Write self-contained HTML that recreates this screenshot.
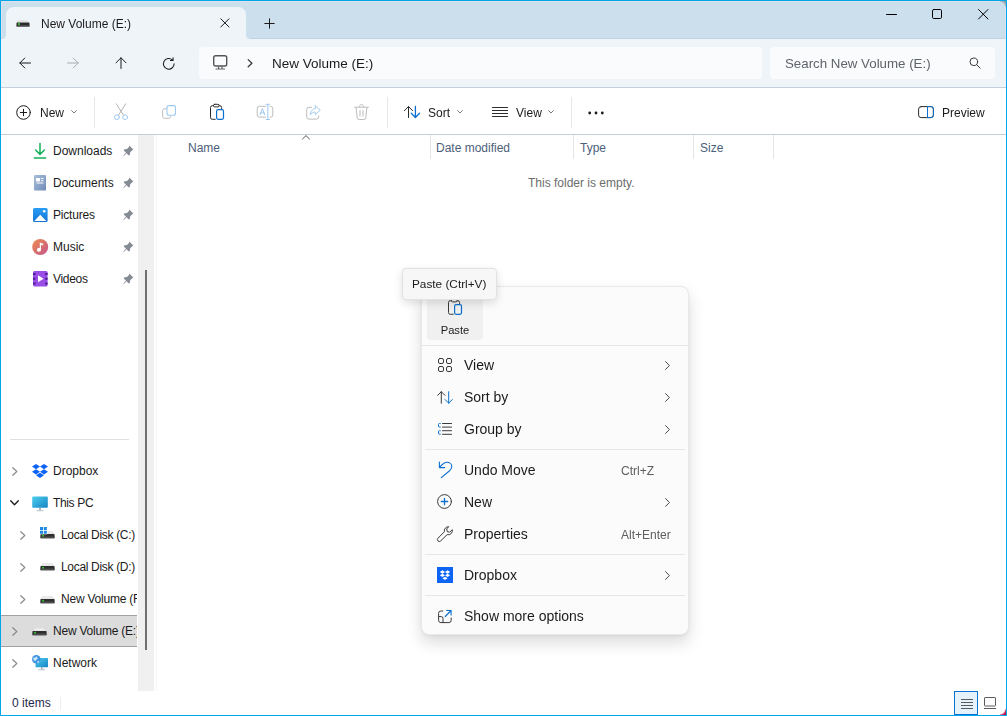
<!DOCTYPE html>
<html lang="en">
<head>
<meta charset="utf-8">
<title>New Volume (E:) - File Explorer</title>
<style>
*{box-sizing:border-box;margin:0;padding:0}
html,body{width:1007px;height:716px;overflow:hidden;background:#fff}
body{font-family:"Liberation Sans",sans-serif;font-size:12px;color:#1b1b1b;position:relative}
#frame{position:absolute;left:0;top:0;width:1007px;height:716px;border:1px solid #00a6ea;z-index:50;pointer-events:none}
#titlebar{position:absolute;left:1px;top:1px;width:1005px;height:38px;background:#cbdfed;border-top:1px solid #dde3ec;border-left:1px solid #dde3ec;border-right:1px solid #dde3ec;border-bottom:1px solid #bed2e2}
#tab{position:absolute;left:6px;top:7px;width:240px;height:33px;background:#eff4f9;border-radius:8px 8px 0 0}
.ear{position:absolute;top:35px;width:4px;height:4px;background:radial-gradient(circle at var(--cx) 0,#cbdfed 3.500px,#eff4f9 4.500px)}
#navbar{position:absolute;left:1px;top:39px;width:1005px;height:49px;background:#eff4f9;border-bottom:1px solid #c3d0dc}
.box{position:absolute;top:47px;height:32px;background:#f9fbfd;border-radius:4px}
#toolbar{position:absolute;left:1px;top:88px;width:1005px;height:47px;background:#fff;border-bottom:1px solid #c1cfdc}
.tsep{position:absolute;top:97px;width:1px;height:31px;background:#e6e6e6}
.t{position:absolute;white-space:nowrap;line-height:16px}
.g,.mi,.sc{will-change:transform}
.ic{position:absolute;overflow:visible}
#navpane{position:absolute;left:1px;top:135px;width:137px;height:556px;background:#fff;overflow:hidden}
#scroll{position:absolute;left:138px;top:135px;width:16px;height:556px;background:#f0f0f0}
#thumb{position:absolute;left:145px;top:270px;width:2px;height:380px;background:#707070}
#split{position:absolute;left:156px;top:135px;width:1px;height:556px;background:#f5f5f5}
.colsep{position:absolute;top:135px;width:1px;height:24px;background:#e5e5e5}
.hdr{color:#4c607a}
#menu{position:absolute;left:421px;top:286px;width:268px;height:349px;background:#fbfbfb;border:1px solid #e9e9e9;border-radius:8px;box-shadow:0 8px 16px rgba(0,0,0,.14),0 1px 3px rgba(0,0,0,.06)}
.msep{position:absolute;left:425px;width:260px;height:1px;background:#e6e6e6}
.mi{position:absolute;left:464px;font-size:14px;line-height:18px;white-space:nowrap;color:#1b1b1b}
.sc{position:absolute;font-size:12px;line-height:16px;color:#5d5d5d;white-space:nowrap}
#tip{position:absolute;left:402px;top:268px;width:95px;height:32px;background:#f7f7f7;border:1px solid #e2e2e2;border-radius:4px;box-shadow:0 3px 8px rgba(0,0,0,.13)}
svg{position:absolute;overflow:visible}
.s{fill:none;stroke:#1b1b1b;stroke-width:1;stroke-linecap:round;stroke-linejoin:round}
</style>
</head>
<body>
<!-- TITLEBAR -->
<div id="titlebar"></div>
<div id="tab"></div>
<div class="ear" style="left:2px;--cx:0px"></div>
<div class="ear" style="left:246px;--cx:4px"></div>
<!-- drive icon in tab -->
<svg style="left:16px;top:19px" width="14" height="9" viewBox="0 0 14 9"><path d="M2.5 1h9l1.5 2.5H1z" fill="#e3e3e3"/><rect x="0.5" y="3.5" width="13" height="4" rx=".6" fill="#2b2b2b"/><rect x="0.5" y="6" width="13" height="1.5" fill="#4a4a4a"/><circle cx="3" cy="5" r=".9" fill="#3bea3b"/></svg>
<div class="t g" style="left:41px;top:16px">New Volume (E:)</div>
<svg style="left:220px;top:18px" width="10" height="10" viewBox="0 0 10 10"><path class="s" d="M.8.8l8.2 8.2M9 .8L.8 9"/></svg>
<svg style="left:263.500px;top:18px" width="11" height="11" viewBox="0 0 11 11"><path class="s" d="M5.5.8v9.4M.8 5.5h9.4"/></svg>
<!-- window controls -->
<svg style="left:886px;top:9px" width="11" height="11" viewBox="0 0 11 11"><path class="s" style="stroke:#000" d="M.5 5.5h10"/></svg>
<svg style="left:932px;top:9px" width="11" height="11" viewBox="0 0 11 11"><rect class="s" style="stroke:#000" x=".5" y=".5" width="9" height="9" rx="1.2"/></svg>
<svg style="left:978px;top:9px" width="11" height="11" viewBox="0 0 11 11"><path class="s" style="stroke:#000" d="M.5.5l9.5 9.5M10 .5L.5 10"/></svg>

<!-- NAVBAR -->
<div id="navbar"></div>
<div class="box" style="left:199px;width:563px"></div>
<div class="box" style="left:770px;width:225px"></div>
<svg style="left:19px;top:57px" width="12" height="12" viewBox="0 0 12 12"><path class="s" d="M11.5 6H.8M5.8 1L.8 6l5 5"/></svg>
<svg style="left:67px;top:57px" width="12" height="12" viewBox="0 0 12 12"><path class="s" style="stroke:#a9aeb3" d="M.5 6h10.7M6.2 1l5 5-5 5"/></svg>
<svg style="left:115px;top:57px" width="12" height="12" viewBox="0 0 12 12"><path class="s" d="M6 11.5V.8M1 5.8L6 .8l5 5"/></svg>
<svg style="left:162px;top:56.500px" width="13.600" height="13.600" viewBox="0 0 13 13"><path class="s" d="M11.600 6.500a5.100 5.100 0 1 1-1.700-3.800M10.600.800v2.500H8"/></svg>
<!-- monitor -->
<svg style="left:213px;top:55px" width="15" height="15" viewBox="0 0 15 15"><rect class="s" style="stroke:#555;stroke-width:1.400" x=".7" y=".7" width="13" height="10.300" rx="1.800"/><path class="s" style="stroke:#666;stroke-width:1.200" d="M3 14h8.600M5.600 11.300v2.500M9 11.300v2.500"/></svg>
<svg style="left:247px;top:59px" width="6" height="9" viewBox="0 0 6 9"><path class="s" style="stroke:#3a3a3a;stroke-width:1.300" d="M1.200.600l3.700 3.600-3.700 3.600"/></svg>
<div class="t g" style="left:272px;top:55px;font-size:13.5px;line-height:18px">New Volume (E:)</div>
<div class="t g" style="left:785px;top:55px;font-size:13.3px;line-height:18px;color:#5f6368">Search New Volume (E:)</div>
<svg style="left:969px;top:57px" width="12" height="12" viewBox="0 0 12 12"><circle class="s" style="stroke:#3a3a3a" cx="4.8" cy="4.8" r="3.8"/><path class="s" style="stroke:#3a3a3a" d="M7.6 7.6l3.6 3.6"/></svg>

<!-- TOOLBAR -->
<div id="toolbar"></div>

<!-- New -->
<svg style="left:16px;top:105px" width="15" height="15" viewBox="0 0 15 15"><circle class="s" cx="7.5" cy="7.5" r="6.8"/><path class="s" d="M7.5 4.3v6.4M4.3 7.5h6.4"/></svg>
<div class="t g" style="left:40px;top:105px">New</div>
<svg style="left:71px;top:110.400px" width="6" height="4" viewBox="0 0 6 4"><path class="s" style="stroke:#7a7a7a" d="M.6.6L3 3l2.4-2.4"/></svg>
<div class="tsep" style="left:94px"></div>
<!-- cut -->
<svg style="left:114px;top:104px" width="14" height="17" viewBox="0 0 14 17"><path class="s" style="stroke:#b4b4b4" d="M2.300-.2l7.200 11.400M11.700-.2L4.500 11.200"/><circle class="s" style="stroke:#9fc9f0" cx="2.900" cy="13.200" r="2.400"/><circle class="s" style="stroke:#9fc9f0" cx="11.100" cy="13.200" r="2.400"/></svg>
<!-- copy -->
<svg style="left:162px;top:105px" width="15" height="15" viewBox="0 0 15 15"><path class="s" style="stroke:#bdbdbd" d="M4.600 3.800H2.600A2 2 0 0 0 .6 5.800v5.500a2 2 0 0 0 2 2h4.200a2 2 0 0 0 2-1.700"/><rect class="s" style="stroke:#9fc9f0;stroke-width:1.100" x="5" y=".6" width="8.500" height="9.700" rx="2"/></svg>
<!-- paste -->
<svg style="left:210px;top:104px" width="15" height="17" viewBox="0 0 15 17"><path class="s" style="stroke:#2b2b2b" d="M3.400 1.700H2.300A1.800 1.800 0 0 0 .5 3.500v10a1.800 1.800 0 0 0 1.800 1.800h2.900M9.200 1.700h.600a1.800 1.800 0 0 1 1.800 1.800v1.200"/><rect class="s" style="stroke:#2b2b2b" x="3.400" y=".3" width="5.800" height="2.600" rx="1.300"/><rect class="s" style="stroke:#0b6fd0;stroke-width:1.200" x="6.600" y="5.700" width="6.900" height="9.600" rx="1.500"/></svg>
<!-- rename -->
<svg style="left:256px;top:104px" width="17" height="17" viewBox="0 0 17 17"><path class="s" style="stroke:#bdbdbd" d="M9.700 2.300H3.300A2.100 2.100 0 0 0 1.200 4.400v6.600a2.100 2.100 0 0 0 2.100 2.100h6.400M13.900 2.300h.8a2.100 2.100 0 0 1 2.100 2.100v6.600a2.100 2.100 0 0 1-2.100 2.100h-.8"/><path class="s" style="stroke:#9fc9f0" d="M11.800.4v15M10 .3h3.600M10 15.500h3.600"/><path class="s" style="stroke:#9fc9f0" d="M4 10.800L6.400 4.600l2.400 6.200M4.800 8.900h3.200"/></svg>
<!-- share -->
<svg style="left:306px;top:105px" width="15" height="15" viewBox="0 0 15 15"><path class="s" style="stroke:#bdbdbd" d="M5.8 2.3H3A2.3 2.3 0 0 0 .7 4.6v7.2A2.3 2.3 0 0 0 3 14.1h7.4a2.3 2.3 0 0 0 2.3-2.3v-.9"/><path class="s" style="stroke:#a9cdee" d="M9.3.8l5 4.4-5 4.4V7.1C6.9 7 5.200 8 4.2 10c.2-3.300 1.900-6.100 5.100-6.500z"/></svg>
<!-- delete -->
<svg style="left:354px;top:104px" width="15" height="16" viewBox="0 0 15 16"><path class="s" style="stroke:#bdbdbd" d="M.6 3.200h13.800M5.300 3c0-1.300.900-2.400 2.200-2.400S9.700 1.700 9.700 3M2.100 3.400l1.100 10.300a2 2 0 0 0 2 1.800h4.600a2 2 0 0 0 2-1.800l1.100-10.300M6 6.500v5.500M9 6.500v5.500"/></svg>
<div class="tsep" style="left:387px"></div>
<!-- sort -->
<svg style="left:404px;top:105px" width="17" height="14" viewBox="0 0 17 14"><path class="s" style="stroke:#2b2b2b" d="M4.500 12.500V1.600M.4 5.700L4.500 1.500l4.100 4.200"/><path class="s" style="stroke:#0b6fd0;stroke-width:1.300" d="M11.400 1.500V12.400M7.300 8.300l4.100 4.200 4.100-4.200"/></svg>
<div class="t g" style="left:428px;top:105px">Sort</div>
<svg style="left:457px;top:110.400px" width="6" height="4" viewBox="0 0 6 4"><path class="s" style="stroke:#7a7a7a" d="M.6.6L3 3l2.400-2.400"/></svg>
<!-- view -->
<svg style="left:492px;top:107px" width="16" height="11" viewBox="0 0 16 11"><path class="s" style="stroke:#2b2b2b" d="M.5.500h15M.5 3.500h15M.5 6.500h15M.5 9.500h15"/></svg>
<div class="t g" style="left:516px;top:105px">View</div>
<svg style="left:548px;top:110.400px" width="6" height="4" viewBox="0 0 6 4"><path class="s" style="stroke:#7a7a7a" d="M.6.6L3 3l2.400-2.400"/></svg>
<div class="tsep" style="left:571px"></div>
<svg style="left:588px;top:111px" width="16" height="4" viewBox="0 0 16 4"><circle cx="1.700" cy="2" r="1.400" fill="#1b1b1b"/><circle cx="8" cy="2" r="1.400" fill="#1b1b1b"/><circle cx="14.300" cy="2" r="1.400" fill="#1b1b1b"/></svg>
<!-- preview -->
<svg style="left:918px;top:106px" width="16" height="13" viewBox="0 0 16 13"><rect class="s" style="stroke:#2b2b2b" x=".6" y=".6" width="14.800" height="11" rx="2.500"/><path class="s" style="stroke:#0b6fd0" d="M9.500.6v11M9.500.6h3.400a2.500 2.500 0 0 1 2.500 2.500v6a2.500 2.500 0 0 1-2.500 2.500H9.500"/></svg>
<div class="t g" style="left:942px;top:105px">Preview</div>


<!-- NAV PANE -->
<div id="navpane"></div>
<div id="scroll"></div>
<div id="thumb"></div>
<div id="split"></div>

<div style="position:absolute;left:1px;top:615px;width:136px;height:32px;background:#dcdcdc;border-top:1px solid #a2a2a2;border-bottom:1px solid #a2a2a2"></div>
<div style="position:absolute;left:10px;top:439px;width:119px;height:1px;background:#e0e0e0"></div>
<div id="navclip" style="position:absolute;left:0;top:135px;width:137px;height:556px;overflow:hidden"><div style="position:absolute;left:0;top:-135px">
<!-- downloads -->
<svg style="left:34px;top:143px" width="12" height="16" viewBox="0 0 12 16"><path d="M6 .600v10.600M1.600 7l4.400 4.400L10.400 7M.3 15h11.400" fill="none" stroke="#16b05a" stroke-width="1.500" stroke-linecap="round" stroke-linejoin="round"/></svg>
<div class="t" style="left:53px;top:143px">Downloads</div>
<svg style="left:123px;top:145px" width="11" height="11" viewBox="0 0 11 11"><path d="M6.300.5l4.200 4.200-1.300.5-2 2-.3 2.500-1 .9-2.400-2.400L.8 10.900l-.5-.5 2.700-2.700L.6 5.300l.9-1 2.500-.3 2-2z" fill="#858b92"/></svg>
<!-- documents -->
<svg style="left:34px;top:175px" width="12" height="16" viewBox="0 0 12 16"><defs><linearGradient id="gd" x1="0" y1="0" x2="1" y2="1"><stop offset="0" stop-color="#a9bedb"/><stop offset="1" stop-color="#6f8bb6"/></linearGradient></defs><rect x="0" y="0" width="12" height="15.600" rx="1.200" fill="url(#gd)"/><path d="M2.500 3.500h3v2.500h-3zM7 3.500h2.500M7 5.700h2.500M2.500 8h7" stroke="#fff" stroke-width="1.100" fill="none"/><rect x="2.500" y="3.300" width="3" height="2.700" fill="#fff"/></svg>
<div class="t" style="left:53px;top:175px">Documents</div>
<svg style="left:123px;top:177px" width="11" height="11" viewBox="0 0 11 11"><path d="M6.300.5l4.200 4.200-1.300.5-2 2-.3 2.500-1 .9-2.400-2.400L.8 10.900l-.5-.5 2.700-2.700L.6 5.300l.9-1 2.500-.3 2-2z" fill="#858b92"/></svg>
<!-- pictures -->
<svg style="left:33px;top:208px" width="15" height="14" viewBox="0 0 15 14"><defs><linearGradient id="gp" x1="0" y1="0" x2="0" y2="1"><stop offset="0" stop-color="#2a9df4"/><stop offset="1" stop-color="#1274d8"/></linearGradient></defs><rect width="14.600" height="14" rx="1.500" fill="url(#gp)"/><path d="M1.300 13l5.900-6.300L13.300 13z" fill="#fff"/><circle cx="11.200" cy="3.200" r="1.300" fill="#fff"/></svg>
<div class="t" style="left:53px;top:207px;letter-spacing:-.2px">Pictures</div>
<svg style="left:123px;top:209px" width="11" height="11" viewBox="0 0 11 11"><path d="M6.300.5l4.200 4.200-1.300.5-2 2-.3 2.500-1 .9-2.400-2.400L.8 10.900l-.5-.5 2.700-2.700L.6 5.300l.9-1 2.500-.3 2-2z" fill="#858b92"/></svg>
<!-- music -->
<svg style="left:32px;top:239px" width="17" height="17" viewBox="0 0 17 17"><defs><linearGradient id="gm" x1="0" y1="0" x2="1" y2="1"><stop offset="0" stop-color="#f08c4e"/><stop offset="1" stop-color="#c2558c"/></linearGradient></defs><circle cx="8.200" cy="8" r="8" fill="url(#gm)"/><path d="M7.800 3.500l3.400 1.300v1.700l-2.200-.8v5a2 2 0 1 1-1.200-1.800z" fill="#fff"/></svg>
<div class="t" style="left:53px;top:239px">Music</div>
<svg style="left:123px;top:241px" width="11" height="11" viewBox="0 0 11 11"><path d="M6.300.5l4.200 4.200-1.300.5-2 2-.3 2.500-1 .9-2.400-2.400L.8 10.900l-.5-.5 2.700-2.700L.6 5.300l.9-1 2.500-.3 2-2z" fill="#858b92"/></svg>
<!-- videos -->
<svg style="left:33px;top:271px" width="15" height="16" viewBox="0 0 15 16"><rect width="14.600" height="15.600" rx="1.500" fill="#9a4ce6"/><path d="M0 2h2.500v2H0zM0 6.800h2.500v2H0zM0 11.600h2.500v2H0zM12.100 2h2.500v2h-2.500zM12.100 6.800h2.500v2h-2.500zM12.100 11.600h2.500v2h-2.500z" fill="#4b1f8f"/><path d="M5 4.300l5.600 3.500L5 11.300z" fill="#fff"/></svg>
<div class="t" style="left:53px;top:271px;letter-spacing:-.3px">Videos</div>
<svg style="left:123px;top:273px" width="11" height="11" viewBox="0 0 11 11"><path d="M6.300.5l4.200 4.200-1.300.5-2 2-.3 2.500-1 .9-2.400-2.400L.8 10.900l-.5-.5 2.700-2.700L.6 5.300l.9-1 2.500-.3 2-2z" fill="#858b92"/></svg>
<!-- dropbox -->
<svg style="left:12px;top:467px" width="6" height="9" viewBox="0 0 6 9"><path class="s" style="stroke:#8a8a8a;stroke-width:1.200" d="M.8.700l4 3.800-4 3.800"/></svg>
<svg style="left:32px;top:464px" width="16" height="14" viewBox="0 0 16 14"><path d="M4 0l4 2.600-4 2.600-4-2.600zM12 0l4 2.600-4 2.600-4-2.600zM4 5.200l4 2.600-4 2.600-4-2.600zM12 5.200l4 2.600-4 2.600-4-2.600zM8 8.700l4 2.600L8 13.900 4 11.300z" fill="#0d63f3"/></svg>
<div class="t" style="left:53px;top:463px">Dropbox</div>
<!-- this pc -->
<svg style="left:10px;top:500px" width="9" height="6" viewBox="0 0 9 6"><path class="s" style="stroke:#1b1b1b;stroke-width:1.300" d="M.7.800l3.800 4 3.800-4"/></svg>
<svg style="left:32px;top:496px" width="16" height="16" viewBox="0 0 16 16"><defs><linearGradient id="gpc" x1="0" y1="0" x2="1" y2="1"><stop offset="0" stop-color="#4fd0ee"/><stop offset="1" stop-color="#1583c4"/></linearGradient></defs><rect x=".2" y=".4" width="15.600" height="11.400" rx="1" fill="url(#gpc)"/><path d="M7.200 11.800h1.600v2.400H7.200z" fill="#9aa5ae"/><path d="M4.500 14.200h7v1h-7z" fill="#b4bec6"/></svg>
<div class="t" style="left:53px;top:495px;letter-spacing:-.35px">This PC</div>
<!-- C: -->
<svg style="left:20px;top:531px" width="6" height="9" viewBox="0 0 6 9"><path class="s" style="stroke:#8a8a8a;stroke-width:1.200" d="M.8.700l4 3.800-4 3.800"/></svg>

<svg style="left:40px;top:531px" width="15" height="8" viewBox="0 0 15 8"><path d="M2.600.3h9.800l2 3H.6z" fill="#d6d6d6"/><path d="M3 .3h9l1.500 2.500H1.500z" fill="#ececec"/><rect x=".4" y="3" width="14.200" height="4.200" rx=".7" fill="#2e2e2e"/><rect x=".4" y="5.600" width="14.200" height="1.600" rx=".5" fill="#4d4d4d"/><circle cx="3.100" cy="4.700" r=".9" fill="#35e035"/></svg>
<svg style="left:40px;top:527px" width="7" height="7" viewBox="0 0 7 7"><rect x="-.3" y="-.3" width="7.600" height="7.600" fill="#fff"/><path d="M0 0h3v3H0zM3.800 0h3v3h-3zM0 3.800h3v3H0zM3.800 3.800h3v3h-3z" fill="#1e88e5"/></svg>
<div class="t" style="left:61px;top:527px;letter-spacing:-.32px">Local Disk (C:)</div>
<!-- D: -->
<svg style="left:20px;top:563px" width="6" height="9" viewBox="0 0 6 9"><path class="s" style="stroke:#8a8a8a;stroke-width:1.200" d="M.8.700l4 3.800-4 3.800"/></svg>
<svg style="left:40px;top:563px" width="15" height="8" viewBox="0 0 15 8"><path d="M2.600.3h9.800l2 3H.6z" fill="#d6d6d6"/><path d="M3 .3h9l1.500 2.500H1.500z" fill="#ececec"/><rect x=".4" y="3" width="14.200" height="4.200" rx=".7" fill="#2e2e2e"/><rect x=".4" y="5.600" width="14.200" height="1.600" rx=".5" fill="#4d4d4d"/><circle cx="3.100" cy="4.700" r=".9" fill="#35e035"/></svg>
<div class="t" style="left:61px;top:559px;letter-spacing:-.32px">Local Disk (D:)</div>
<!-- New Volume -->
<svg style="left:20px;top:595px" width="6" height="9" viewBox="0 0 6 9"><path class="s" style="stroke:#8a8a8a;stroke-width:1.200" d="M.8.700l4 3.800-4 3.800"/></svg>
<svg style="left:40px;top:596px" width="15" height="8" viewBox="0 0 15 8"><path d="M2.600.3h9.800l2 3H.6z" fill="#d6d6d6"/><path d="M3 .3h9l1.500 2.500H1.500z" fill="#ececec"/><rect x=".4" y="3" width="14.200" height="4.200" rx=".7" fill="#2e2e2e"/><rect x=".4" y="5.600" width="14.200" height="1.600" rx=".5" fill="#4d4d4d"/><circle cx="3.100" cy="4.700" r=".9" fill="#35e035"/></svg>
<div class="t" style="left:61px;top:591px;letter-spacing:-.22px">New Volume (F:)</div>
<!-- E: -->
<svg style="left:12px;top:627px" width="6" height="9" viewBox="0 0 6 9"><path class="s" style="stroke:#8a8a8a;stroke-width:1.200" d="M.8.700l4 3.800-4 3.800"/></svg>
<svg style="left:32px;top:628px" width="15" height="8" viewBox="0 0 15 8"><path d="M2.600.3h9.800l2 3H.6z" fill="#d6d6d6"/><path d="M3 .3h9l1.500 2.500H1.500z" fill="#ececec"/><rect x=".4" y="3" width="14.200" height="4.200" rx=".7" fill="#2e2e2e"/><rect x=".4" y="5.600" width="14.200" height="1.600" rx=".5" fill="#4d4d4d"/><circle cx="3.100" cy="4.700" r=".9" fill="#35e035"/></svg>
<div class="t" style="left:53px;top:623px;letter-spacing:-.22px">New Volume (E:)</div>
<!-- network -->
<svg style="left:12px;top:659px" width="6" height="9" viewBox="0 0 6 9"><path class="s" style="stroke:#8a8a8a;stroke-width:1.200" d="M.8.700l4 3.800-4 3.800"/></svg>
<svg style="left:32px;top:655px" width="17" height="16" viewBox="0 0 17 16"><defs><linearGradient id="gn" x1="0" y1="0" x2="1" y2="1"><stop offset="0" stop-color="#4fd0ee"/><stop offset="1" stop-color="#1583c4"/></linearGradient></defs><rect x="3.500" y="3" width="12.500" height="9.200" rx=".8" fill="url(#gn)"/><path d="M9 12.200h1.600v2H9z" fill="#9aa5ae"/><path d="M6.500 14.200h6.500v1H6.500z" fill="#b4bec6"/><circle cx="4.300" cy="4.300" r="4.300" fill="#3f93dd"/><path d="M1.200 2.400c1.200.6 2.300.3 2.900-1 .9.300 1.800 1.100 1.500 2.300-.6 1-1.800 1-2 2.200-1 .2-2.100-.6-2.400-1.800z" fill="#c9e8f8"/><path d="M5.500 6.200c.8-.3 1.700.1 1.800.9-.5.700-1.400 1-2 .6z" fill="#c9e8f8"/></svg>
<div class="t" style="left:53px;top:655px">Network</div>
</div></div>


<!-- CONTENT -->

<div class="colsep" style="left:430px"></div>
<div class="colsep" style="left:573px"></div>
<div class="colsep" style="left:693px"></div>
<div class="colsep" style="left:773px"></div>
<svg style="left:301.500px;top:135px" width="8" height="5" viewBox="0 0 8 5"><path class="s" style="stroke:#5a5a5a" d="M.5 4L4 .6 7.500 4"/></svg>
<div class="t hdr" style="left:188px;top:140px">Name</div>
<div class="t hdr" style="left:436px;top:140px">Date modified</div>
<div class="t hdr" style="left:580px;top:140px">Type</div>
<div class="t hdr" style="left:700px;top:140px">Size</div>
<div class="t" style="left:528px;top:175px;color:#6d6d6d">This folder is empty.</div>


<!-- STATUS -->

<div class="t" style="left:12px;top:695px;color:#1e2a4a">0 items</div>
<div style="position:absolute;left:60px;top:697px;width:1px;height:13px;background:#efefef"></div>
<div style="position:absolute;left:954px;top:691px;width:24px;height:24px;background:#e5f1fb;border:1px solid #0a74d4"></div>
<svg style="left:960px;top:698px" width="13" height="12" viewBox="0 0 13 12"><path d="M1 1.500h12M1 4.500h12M1 7.500h12M1 10.500h12" stroke="#5a5a5a" stroke-width="1" fill="none"/></svg>
<svg style="left:984px;top:697px" width="13" height="13" viewBox="0 0 13 13"><rect x=".5" y=".5" width="11" height="8.500" rx=".6" fill="none" stroke="#5a5a5a"/><path d="M0 11.500h12" stroke="#5a5a5a" fill="none"/></svg>
<div style="position:absolute;left:1000px;top:709px;width:6px;height:6px;background:radial-gradient(circle at 0 0,rgba(194,19,76,0) 4.500px,#c2134c 6.500px)"></div>

<!-- MENU -->
<div id="menu"></div>

<div style="position:absolute;left:427px;top:293px;width:56px;height:47px;background:#f0f0f0;border-radius:4px"></div>
<svg style="left:448px;top:299px" width="15" height="17" viewBox="0 0 15 17"><path class="s" style="stroke:#3a3a3a" d="M3.400 1.700H2.300A1.800 1.800 0 0 0 .5 3.500v10a1.800 1.800 0 0 0 1.800 1.800h2.900M9.200 1.700h.600a1.800 1.800 0 0 1 1.800 1.800v1.200"/><rect class="s" style="stroke:#3a3a3a" x="3.400" y=".3" width="5.800" height="2.600" rx="1.300"/><rect class="s" style="stroke:#0b6fd0;stroke-width:1.200" x="6.600" y="5.700" width="6.900" height="9.600" rx="1.500"/></svg>
<div class="t g" style="left:427px;width:56px;text-align:center;top:322px;font-size:11.200px">Paste</div>
<div class="msep" style="left:422px;width:266px;top:345px"></div>
<!-- View -->
<svg style="left:438px;top:358px" width="14" height="14" viewBox="0 0 14 14"><rect class="s" style="stroke:#3a3a3a" x=".5" y=".5" width="5" height="5" rx="1.500"/><rect class="s" style="stroke:#3a3a3a" x="8.500" y=".5" width="5" height="5" rx="1.500"/><rect class="s" style="stroke:#3a3a3a" x=".5" y="8.500" width="5" height="5" rx="1.500"/><rect class="s" style="stroke:#3a3a3a" x="8.500" y="8.500" width="5" height="5" rx="1.500"/></svg>
<div class="mi" style="top:356px">View</div>
<svg style="left:665px;top:361px" width="5" height="9" viewBox="0 0 5 9"><path class="s" style="stroke:#4a4a4a" d="M.6.600l3.800 3.900-3.800 3.900"/></svg>
<!-- Sort by -->
<svg style="left:437px;top:391px" width="17" height="13" viewBox="0 0 17 13"><path class="s" style="stroke:#3a3a3a" d="M4.300 12.200V.700M.6 4.400L4.300.700l3.700 3.700"/><path class="s" style="stroke:#0b6fd0" d="M11.700.700V12.200M8 8.500l3.700 3.700 3.700-3.700"/></svg>
<div class="mi" style="top:388px">Sort by</div>
<svg style="left:665px;top:393px" width="5" height="9" viewBox="0 0 5 9"><path class="s" style="stroke:#4a4a4a" d="M.6.600l3.800 3.900-3.800 3.900"/></svg>
<!-- Group by -->
<svg style="left:438px;top:421px" width="14" height="15" viewBox="0 0 14 15"><path class="s" style="stroke:#3a3a3a" d="M4.500 2.500h9M4.500 6.100h9M4.500 9.700h9M4.500 13.300h9"/><path class="s" style="stroke:#0b6fd0" d="M2.300 2.500H1.500a1 1 0 0 0-1 1v1.600a1 1 0 0 0 1 1h.8M2.300 9.700H1.500a1 1 0 0 0-1 1v1.600a1 1 0 0 0 1 1h.8"/></svg>
<div class="mi" style="top:420px">Group by</div>
<svg style="left:665px;top:425px" width="5" height="9" viewBox="0 0 5 9"><path class="s" style="stroke:#4a4a4a" d="M.6.600l3.800 3.900-3.800 3.900"/></svg>
<div class="msep" style="top:449px"></div>
<!-- Undo -->
<svg style="left:438px;top:461px" width="15" height="17" viewBox="0 0 15 17"><path class="s" style="stroke:#0b6fd0;stroke-width:1.100" d="M1.400 1.100V6.600H6.700M1.800 6.200C4 3.500 6.500 1.300 9 1.300c2.800 0 4.800 2 4.800 4.300 0 1.900-1.300 3.400-2.800 4.600L3.300 16.600"/></svg>
<div class="mi" style="top:461px">Undo Move</div>
<div class="sc" style="left:621px;top:463px">Ctrl+Z</div>
<!-- New -->
<svg style="left:437px;top:494px" width="16" height="16" viewBox="0 0 16 16"><circle class="s" style="stroke:#3a3a3a" cx="7.500" cy="7.500" r="6.900"/><path class="s" style="stroke:#0b6fd0;stroke-width:1.300" d="M7.500 4.300v6.400M4.300 7.500h6.400"/></svg>
<div class="mi" style="top:493px">New</div>
<svg style="left:665px;top:498px" width="5" height="9" viewBox="0 0 5 9"><path class="s" style="stroke:#4a4a4a" d="M.6.600l3.800 3.900-3.800 3.900"/></svg>
<!-- Properties -->
<svg style="left:437px;top:526px" width="16" height="16" viewBox="0 0 16 16"><path class="s" style="stroke:#3a3a3a" d="M11.300.700a4 4 0 0 0-3.900 5L1 12.200a1.900 1.900 0 0 0 2.700 2.700L10.200 8.600a4 4 0 0 0 5-4.900L12.700 6.200 10.300 5.700 9.800 3.300z"/></svg>
<div class="mi" style="top:525px">Properties</div>
<div class="sc" style="left:621px;top:527px">Alt+Enter</div>
<div class="msep" style="top:554px"></div>
<!-- Dropbox -->
<svg style="left:437px;top:567px" width="16" height="16" viewBox="0 0 16 16"><rect width="16" height="16" fill="#0d63f3"/><g transform="translate(8 8.100) scale(1.120) translate(-8 -8.100)"><path d="M5.700 3.800l2.300 1.500-2.300 1.500-2.300-1.500zM10.300 3.800l2.300 1.500-2.300 1.500L8 5.300zM5.700 6.800L8 8.300 5.700 9.800 3.400 8.300zM10.300 6.800l2.300 1.500-2.300 1.500L8 8.300zM8 9.500l2.300 1.500L8 12.500 5.700 11z" fill="#fff"/></g></svg>
<div class="mi" style="top:566px">Dropbox</div>
<svg style="left:665px;top:571px" width="5" height="9" viewBox="0 0 5 9"><path class="s" style="stroke:#4a4a4a" d="M.6.600l3.800 3.900-3.800 3.900"/></svg>
<div class="msep" style="top:595px"></div>
<!-- Show more -->
<svg style="left:438px;top:608px" width="15" height="16" viewBox="0 0 15 16"><path class="s" style="stroke:#3a3a3a" d="M4.800 3H2.900A2.300 2.300 0 0 0 .6 5.300v7a2.300 2.300 0 0 0 2.300 2.300h8a2.300 2.300 0 0 0 2.300-2.300V10M.6 8.600h2.600a1.800 1.800 0 0 1 1.800 1.800v4.200"/><path class="s" style="stroke:#0b6fd0;stroke-width:1.100" d="M8.600 2.500h4.500v4.500M13.100 2.500L7.200 8.500"/></svg>
<div class="mi" style="top:607px">Show more options</div>

<div id="tip"></div>
<div class="t g" style="left:412px;top:276px;font-size:11.800px">Paste (Ctrl+V)</div>

<div style="position:absolute;left:1000px;top:1px;width:6px;height:6px;background:radial-gradient(circle at 0 100%,rgba(150,160,170,0) 4.500px,#98a2ac 6.500px)"></div>
<div id="frame"></div>
</body>
</html>
